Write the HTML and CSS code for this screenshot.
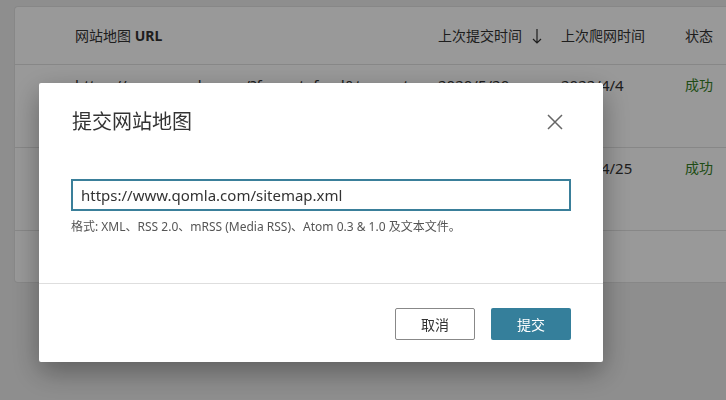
FILE: index.html
```html
<!DOCTYPE html>
<html lang="zh-CN">
<head>
    <meta charset="UTF-8">
    <meta name="viewport" content="width=device-width, initial-scale=1.0">
    <title>网站地图</title>
    <link rel="stylesheet" href="styles.css">
</head>
<body>
    <div class="card">
        <div class="table-row table-head">
            <div class="cell"></div>
            <div class="cell">网站地图 <b>URL</b></div>
            <div class="cell">上次提交时间
                <svg class="sort-icon" width="10" height="16" viewBox="0 0 10 16">
                    <path d="M5 1 V15 M1 11 L5 15 L9 11" fill="none" stroke="#333" stroke-width="1.2"/>
                </svg>
            </div>
            <div class="cell">上次爬网时间</div>
            <div class="cell">状态</div>
        </div>
        <div class="table-row">
            <div class="cell"></div>
            <div class="cell url">https://www.qomla.com/?format=feed&amp;type=atom</div>
            <div class="cell">2020/5/20</div>
            <div class="cell">2022/4/4</div>
            <div class="cell status-ok">成功</div>
        </div>
        <div class="table-row">
            <div class="cell"></div>
            <div class="cell url">https://www.qomla.com/sitemap.xml</div>
            <div class="cell">2020/5/20</div>
            <div class="cell">2022/4/25</div>
            <div class="cell status-ok">成功</div>
        </div>
        <div class="table-foot"></div>
    </div>

    <div class="overlay">
        <div class="dialog">
            <div class="dialog-header">
                <h2>提交网站地图</h2>
                <button class="close-btn" aria-label="关闭">
                    <svg width="16" height="16" viewBox="0 0 16 16">
                        <path d="M1 1 L15 15 M15 1 L1 15" stroke="#666" stroke-width="1.5"/>
                    </svg>
                </button>
            </div>
            <div class="dialog-body">
                <input type="text" class="url-input" value="https://www.qomla.com/sitemap.xml">
                <p class="hint">格式: XML、RSS 2.0、mRSS (Media RSS)、Atom 0.3 &amp; 1.0 及文本文件。</p>
            </div>
            <div class="dialog-footer">
                <button class="btn btn-cancel">取消</button>
                <button class="btn btn-primary">提交</button>
            </div>
        </div>
    </div>
</body>
</html>
```

FILE: styles.css
```css
* {
    box-sizing: border-box;
    margin: 0;
    padding: 0;
}

body {
    font-family: "Noto Sans", "Noto Sans CJK SC", sans-serif;
    background-color: #ededed;
    color: #333;
    font-size: 14px;
    padding: 6px 0 0 14px;
    overflow: hidden;
    height: 400px;
}

.card {
    width: 712px;
    background: white;
    border: 1px solid #e2e2e2;
    border-right: none;
    border-radius: 4px 0 0 4px;
}

.table-row {
    display: grid;
    grid-template-columns: 60px 363px 123px 124px 1fr;
    height: 83px;
    border-bottom: 1px solid #e2e2e2;
    font-size: 15px;
}

.table-head {
    height: 58px;
    align-items: center;
    font-size: 14px;
}

.table-head .cell {
    padding-top: 0;
}

.table-head b {
    font-weight: 700;
}

.cell {
    padding-top: 10px;
    line-height: 20px;
    white-space: nowrap;
}

.url {
    padding-right: 16px;
    white-space: normal;
    word-break: break-all;
}

.sort-icon {
    vertical-align: -3px;
    margin-left: 6px;
}

.status-ok {
    color: #357f25;
    font-size: 14px;
}

.table-foot {
    height: 51px;
}

.overlay {
    position: fixed;
    inset: 0;
    background: rgba(0, 0, 0, 0.4);
    padding: 83px 0 0 39px;
}

.dialog {
    width: 564px;
    background: white;
    border-radius: 2px;
    box-shadow: 0 10px 28px rgba(0, 0, 0, 0.35);
}

.dialog-header {
    display: flex;
    justify-content: space-between;
    align-items: center;
    padding: 26px 40px 0 33px;
}

.dialog-header h2 {
    font-size: 20px;
    font-weight: 400;
    line-height: 26px;
    color: #333;
}

.close-btn {
    background: none;
    border: none;
    width: 16px;
    height: 16px;
    display: flex;
}

.dialog-body {
    padding: 44px 32px 48px;
}

.url-input {
    display: block;
    width: 100%;
    height: 32px;
    border: 2px solid #3a7f9a;
    padding: 0 8px;
    font-family: "Noto Sans", "Noto Sans CJK SC", sans-serif;
    font-size: 15px;
    color: #333;
    outline: none;
}

.hint {
    margin-top: 8px;
    font-size: 12px;
    line-height: 16px;
    color: #555;
}

.dialog-footer {
    display: flex;
    justify-content: flex-end;
    gap: 16px;
    border-top: 1px solid #dedede;
    padding: 24px 32px 22px;
}

.btn {
    width: 80px;
    height: 32px;
    border-radius: 2px;
    font-family: "Noto Sans", "Noto Sans CJK SC", sans-serif;
    font-size: 14px;
}

.btn-cancel {
    background: white;
    border: 1px solid #888;
    color: #333;
}

.btn-primary {
    background: #357f9b;
    border: none;
    color: white;
}
```
